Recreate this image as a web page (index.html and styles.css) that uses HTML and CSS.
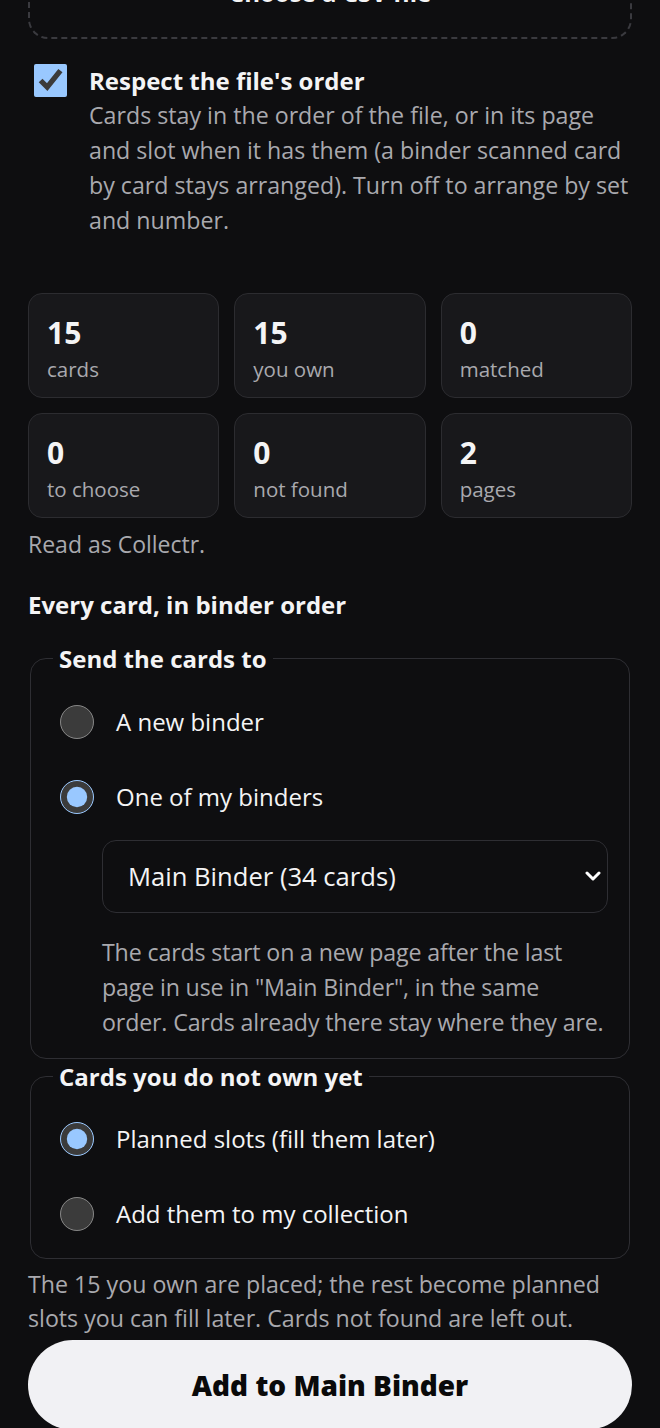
FILE: index.html
```html
<!DOCTYPE html>
<html lang="en">
<head>
    <meta charset="UTF-8">
    <meta name="viewport" content="width=device-width, initial-scale=1.0">
    <title>Import cards</title>
    <link rel="stylesheet" href="styles.css">
</head>
<body>
    <div class="page">
        <label class="drop-zone">
            <span>Choose a CSV file</span>
        </label>

        <label class="order-option">
            <input type="checkbox" checked>
            <span class="order-text">
                <strong>Respect the file's order</strong>
                <span class="hint">Cards stay in the order of the file, or in its page and slot when it has them (a binder scanned card by card stays arranged). Turn off to arrange by set and number.</span>
            </span>
        </label>

        <div class="stats">
            <div class="stat"><b>15</b><span>cards</span></div>
            <div class="stat"><b>15</b><span>you own</span></div>
            <div class="stat"><b>0</b><span>matched</span></div>
            <div class="stat"><b>0</b><span>to choose</span></div>
            <div class="stat"><b>0</b><span>not found</span></div>
            <div class="stat"><b>2</b><span>pages</span></div>
        </div>
        <p class="read-as">Read as Collectr.</p>

        <h2 class="section-title">Every card, in binder order</h2>

        <fieldset class="choice">
            <legend>Send the cards to</legend>
            <label class="radio-row">
                <input type="radio" name="target">
                <span>A new binder</span>
            </label>
            <label class="radio-row">
                <input type="radio" name="target" checked>
                <span>One of my binders</span>
            </label>
            <div class="binder-pick">
                <div class="select-wrap">
                    <select>
                        <option>Main Binder (34 cards)</option>
                        <option>Trade Binder (12 cards)</option>
                    </select>
                    <svg class="chevron" width="16" height="12" viewBox="0 0 16 12">
                        <polyline points="2,3 8,9 14,3" fill="none" stroke="#fff" stroke-width="3" stroke-linecap="round" stroke-linejoin="round"/>
                    </svg>
                </div>
                <p class="hint">The cards start on a new page after the last page in use in "Main Binder", in the same order. Cards already there stay where they are.</p>
            </div>
        </fieldset>

        <fieldset class="choice last">
            <legend>Cards you do not own yet</legend>
            <label class="radio-row">
                <input type="radio" name="missing" checked>
                <span>Planned slots (fill them later)</span>
            </label>
            <label class="radio-row">
                <input type="radio" name="missing">
                <span>Add them to my collection</span>
            </label>
        </fieldset>

        <p class="summary">The 15 you own are placed; the rest become planned slots you can fill later. Cards not found are left out.</p>

        <button class="submit-btn">Add to Main Binder</button>
    </div>
</body>
</html>
```

FILE: styles.css
```css
:root {
    color-scheme: dark;
    accent-color: #99c8ff;
}

body {
    margin: 0;
    background: #0e0e10;
    color: #f4f4f5;
    font-family: "Open Sans", "Noto Sans", sans-serif;
    font-size: 23.2px;
    line-height: 35px;
    overflow: hidden;
}

.page {
    padding: 0 28px 40px;
    margin-top: -53px;
}

.drop-zone {
    display: flex;
    justify-content: center;
    align-items: center;
    box-sizing: border-box;
    height: 92px;
    padding-bottom: 2px;
    border: 2px dashed #3a3a3f;
    border-radius: 20px;
    font-weight: 700;
    font-size: 24px;
}

.order-option {
    display: flex;
    gap: 22px;
    margin-top: 24px;
    padding-left: 6px;
}

.order-option input {
    width: 33px;
    height: 33px;
    margin: 1px 0 0;
    flex-shrink: 0;
}

.order-text strong {
    display: block;
    font-size: 24px;
}

.hint {
    color: #a9a9ae;
}

.order-text .hint {
    display: block;
}

.stats {
    display: grid;
    grid-template-columns: repeat(3, 1fr);
    gap: 15px;
    margin-top: 55px;
}

.stat {
    display: flex;
    flex-direction: column;
    height: 105px;
    box-sizing: border-box;
    padding: 18px 18px;
    background: #18181b;
    border: 1px solid #2c2c30;
    border-radius: 14px;
}

.stat b {
    font-size: 30px;
    line-height: 42px;
}

.stat span {
    color: #a9a9ae;
    font-size: 20.5px;
    line-height: 30px;
}

.read-as {
    margin: 9px 0 0;
    color: #a9a9ae;
    font-size: 23px;
}

.section-title {
    margin: 25px 0 19px;
    font-size: 24px;
    line-height: 35px;
}

.choice {
    margin: 0 2px;
    padding: 8px 21px 18px 29px;
    border: 1px solid #2e2e33;
    border-radius: 16px;
}

.choice.last {
    padding-top: 7px;
    padding-bottom: 7px;
}

.choice legend {
    padding: 0 6px;
    margin-left: -7px;
    font-weight: 700;
    font-size: 24px;
}

.radio-row {
    display: flex;
    align-items: center;
    gap: 22px;
    height: 75px;
    font-size: 24px;
}

.radio-row input {
    width: 34px;
    height: 34px;
    margin: 0;
}

.binder-pick {
    padding-left: 42px;
}

.select-wrap {
    position: relative;
    margin-top: 6px;
}

.select-wrap select {
    appearance: none;
    width: 100%;
    height: 73px;
    padding: 0 40px 0 25px;
    background: #0e0e10;
    color: #f4f4f5;
    border: 1px solid #2e2e33;
    border-radius: 14px;
    font-family: inherit;
    font-size: 25.6px;
}

.chevron {
    position: absolute;
    right: 7px;
    top: 30px;
    pointer-events: none;
}

.binder-pick .hint {
    margin: 22px 0 0;
    letter-spacing: -0.15px;
}

.summary {
    margin: 8px 0 0;
    color: #a9a9ae;
    line-height: 34px;
}

.submit-btn {
    width: 100%;
    height: 90px;
    margin-top: 5px;
    background: #f1f1f4;
    color: #0a0a0a;
    border: none;
    border-radius: 45px;
    font-family: inherit;
    font-size: 28px;
    font-weight: 800;
    cursor: pointer;
}
```
